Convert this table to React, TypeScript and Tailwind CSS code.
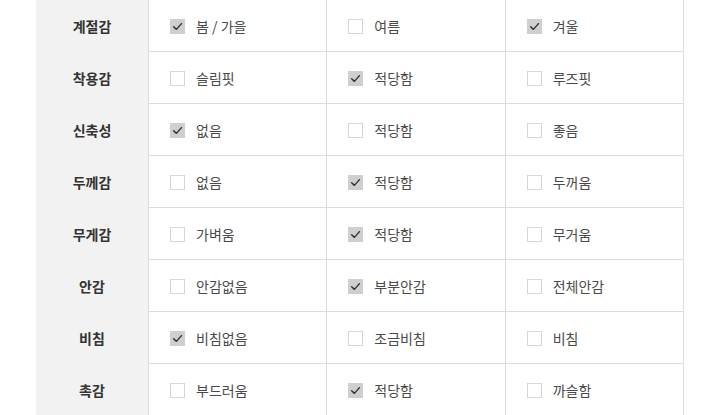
const rows = [
  { label: '계절감', options: ['봄 / 가을', '여름', '겨울'], checked: [0, 2] },
  { label: '착용감', options: ['슬림핏', '적당함', '루즈핏'], checked: [1] },
  { label: '신축성', options: ['없음', '적당함', '좋음'], checked: [0] },
  { label: '두께감', options: ['없음', '적당함', '두꺼움'], checked: [1] },
  { label: '무게감', options: ['가벼움', '적당함', '무거움'], checked: [1] },
  { label: '안감', options: ['안감없음', '부분안감', '전체안감'], checked: [1] },
  { label: '비침', options: ['비침없음', '조금비침', '비침'], checked: [0] },
  { label: '촉감', options: ['부드러움', '적당함', '까슬함'], checked: [1] },
];

function CheckBox({ on }: { on: boolean }) {
  if (on) {
    return (
      <span className="w-[15px] h-[15px] bg-[#cfcfcf] flex items-center justify-center shrink-0">
        <svg width="11" height="11" viewBox="0 0 10 10" fill="none">
          <path d="M1.5 5.2 L4 7.6 L8.6 2.4" stroke="#333" strokeWidth="1.3" strokeLinecap="round" strokeLinejoin="round" />
        </svg>
      </span>
    );
  }
  return <span className="w-[15px] h-[15px] border border-[#d6d6d6] bg-white shrink-0" />;
}

export default function App() {
  return (
    <div
      className="w-[720px] h-[415px] overflow-hidden bg-white"
      style={{ fontFamily: '"Noto Sans CJK KR", "Noto Sans", sans-serif' }}
    >
      <div className="ml-[36px] w-[648px] flex flex-col">
        {rows.map((r) => (
          <div key={r.label} className="flex h-[52px] shrink-0">
            <div className="w-[112px] bg-[#f2f2f2] flex items-center justify-center pt-[1px] text-[14px] font-bold text-[#333]">
              {r.label}
            </div>
            <div className="flex flex-1 border-l border-r border-b border-[#dddddd]">
              {r.options.map((o, i) => (
                <div
                  key={o}
                  className={`flex-1 flex items-center gap-[11px] pl-[21px] pt-[2px] text-[14px] text-[#4a4a4a] ${i < 2 ? 'border-r border-[#dddddd]' : ''}`}
                >
                  <CheckBox on={r.checked.includes(i)} />
                  <span>{o}</span>
                </div>
              ))}
            </div>
          </div>
        ))}
      </div>
    </div>
  );
}
